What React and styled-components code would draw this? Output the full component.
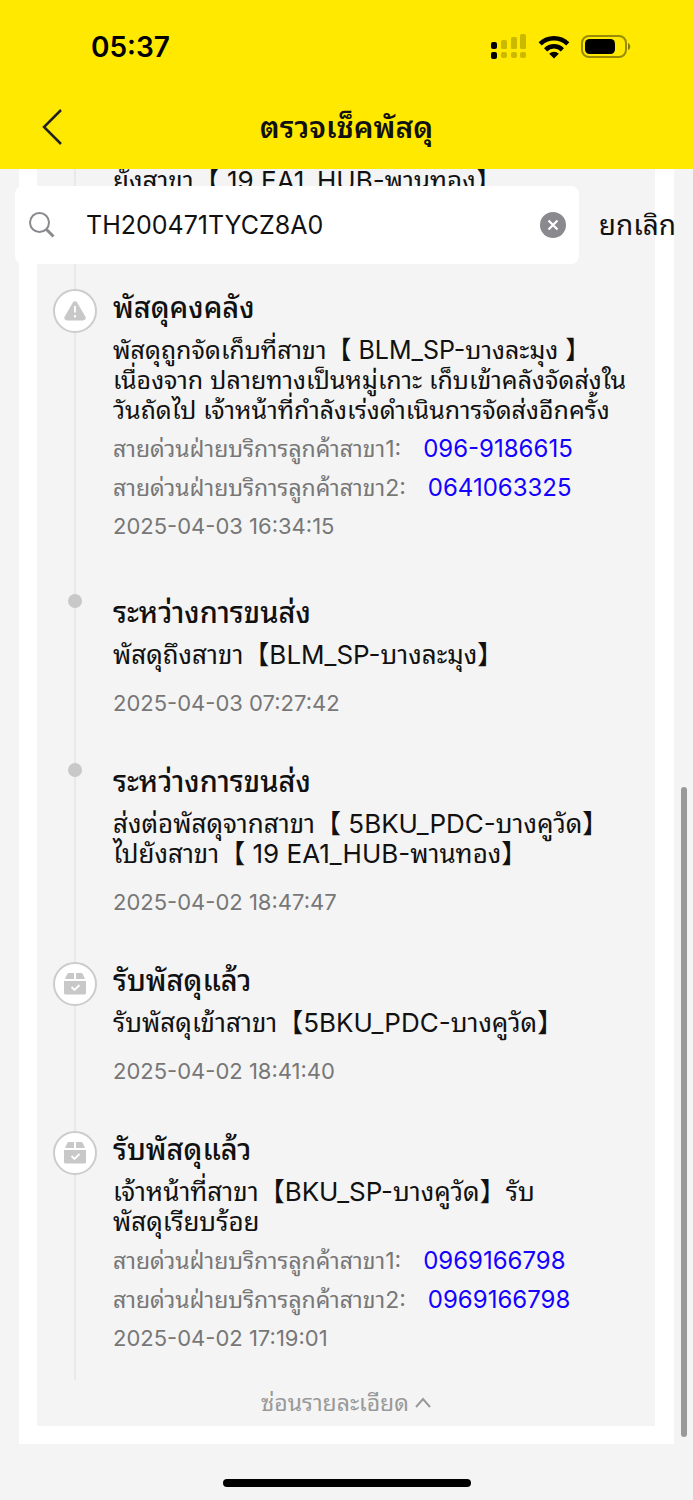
import { useState } from 'react';
import styled, { createGlobalStyle } from 'styled-components'

const GlobalStyle = createGlobalStyle`
  * {
    box-sizing: border-box;
  }
  body {
    margin: 0;
    background-color: #f4f4f4;
    color: #111;
    font-family: Inter, "Noto Sans Thai Looped", Loma, "Noto Sans Thai", "Noto Sans", "Noto Sans CJK JP", sans-serif;
  }
`;

const Page = styled.div`
  position: relative;
  min-height: 100vh;
  overflow: hidden;
`;

const Header = styled.header`
  position: relative;
  z-index: 2;
  background-color: #ffe900;
`;
const StatusBar = styled.div`
  display: flex;
  align-items: center;
  justify-content: space-between;
  height: 94px;
  padding: 0 62px 0 91px;
`;
const Clock = styled.span`
  font-size: 28px;
  font-weight: 600;
  color: #000;
`;
const StatusIcons = styled.div`
  display: flex;
  align-items: center;
  gap: 11px;
`;
const NavBar = styled.div`
  display: grid;
  grid-template-columns: 60px 1fr 60px;
  align-items: center;
  height: 75px;
  padding: 0 22px 10px;
`;
const BackButton = styled.button`
  display: flex;
  justify-content: center;
  padding: 0;
  border: none;
  background: none;
  cursor: pointer;
`;
const Title = styled.h1`
  margin: 0;
  font-size: 30px;
  line-height: 40px;
  font-weight: 600;
  text-align: center;
`;

const Body = styled.main`
  position: relative;
  overflow: hidden;
`;
const SearchBar = styled.form`
  position: absolute;
  z-index: 1;
  top: 17px;
  left: 0;
  right: 0;
  display: flex;
  align-items: center;
  gap: 20px;
  padding: 0 17px 0 15px;
`;
const SearchBox = styled.label`
  flex: 1;
  min-width: 0;
  display: flex;
  align-items: center;
  height: 78px;
  padding: 0 13px;
  border-radius: 8px;
  background-color: white;
`;
const SearchInput = styled.input`
  flex: 1;
  min-width: 0;
  margin-left: 30px;
  padding: 0;
  border: none;
  outline: none;
  background: none;
  color: #111;
  font-family: inherit;
  font-size: 25px;
`;
const ClearButton = styled.button`
  display: flex;
  padding: 0;
  border: none;
  background: none;
  cursor: pointer;
`;
const CancelButton = styled.button`
  padding: 0;
  border: none;
  background: none;
  color: #111;
  font-family: inherit;
  font-size: 28px;
  line-height: 40px;
  cursor: pointer;
`;

/* the list is scrolled, so its first line is cut by the header */
const Card = styled.section`
  margin: -3px 19px 0;
  padding: 0 19px 18px 18px;
  background-color: white;
`;
const Panel = styled.div`
  padding: 0 16px;
  background-color: #f4f4f4;
`;
const Timeline = styled.ol`
  margin: 0;
  padding: 0;
  list-style: none;
`;
const Item = styled.li`
  display: grid;
  grid-template-columns: 44px 1fr;
  column-gap: 16px;
  padding-bottom: ${props => props.$space}px;
  background: linear-gradient(#e9e9e9, #e9e9e9) 21px 0 / 2px 100% no-repeat;
`;
const Marker = styled.div`
  display: flex;
  align-items: flex-start;
  justify-content: center;
  padding-top: 1px;
`;
const Dot = styled.span`
  width: 14px;
  height: 14px;
  border-radius: 50%;
  background-color: #c8c8c8;
`;
const Circle = styled.span`
  display: flex;
  align-items: center;
  justify-content: center;
  width: 44px;
  height: 44px;
  border: 2px solid #ccc;
  border-radius: 50%;
  background-color: white;
`;
const ItemTitle = styled.h2`
  margin: 0 0 7px;
  font-size: 29px;
  line-height: 40px;
  font-weight: 500;
`;
const Detail = styled.p`
  margin: 0;
  font-size: ${props => props.$small ? "25px" : "26px"};
  line-height: 30px;
  white-space: pre;
`;
const Contacts = styled.div`
  margin-top: 4px;
`;
const Contact = styled.div`
  display: flex;
  align-items: baseline;
  gap: 22px;
  height: 39px;
  color: #777;
  font-size: 23px;
  line-height: 39px;
  white-space: nowrap;
`;
const Phone = styled.a`
  color: #1400ff;
  font-size: 24px;
  text-decoration: none;
`;
const Time = styled.time`
  display: block;
  margin-top: ${props => props.$tight ? "4px" : "18px"};
  color: #777;
  font-size: 22px;
  line-height: 30px;
`;
const HideButton = styled.button`
  display: flex;
  align-items: center;
  justify-content: center;
  gap: 6px;
  width: 100%;
  height: 46px;
  padding: 0;
  border: none;
  background: none;
  color: #999;
  font-family: inherit;
  font-size: 23px;
  line-height: 46px;
  cursor: pointer;
`;

const ScrollThumb = styled.div`
  position: absolute;
  z-index: 3;
  right: 6px;
  bottom: 63px;
  width: 6px;
  height: 650px;
  border-radius: 3px;
  background-color: #999;
`;
const HomeIndicator = styled.div`
  position: absolute;
  left: 50%;
  bottom: 13px;
  width: 248px;
  height: 8px;
  margin-left: -124px;
  border-radius: 4px;
  background-color: #000;
`;

const SignalIcon = () => (
  <svg width="36" height="26" viewBox="0 0 36 26">
    <g fill="#000">
      <rect x="0" y="8" width="6" height="7" rx="2" />
      <rect x="0" y="18" width="6" height="7" rx="2" />
    </g>
    <g fill="#000" opacity="0.2">
      <rect x="10" y="6" width="6" height="9" rx="1.5" />
      <rect x="20" y="3" width="6" height="12" rx="1.5" />
      <rect x="29" y="0" width="6" height="15" rx="1.5" />
      <rect x="10" y="18" width="6" height="6" rx="2" />
      <rect x="20" y="18" width="6" height="6" rx="2" />
      <rect x="29" y="18" width="6" height="6" rx="2" />
    </g>
  </svg>
)

const WifiIcon = () => (
  <svg width="32" height="24" viewBox="0 0 32 24" fill="none" stroke="#000" strokeWidth="4.5">
    <path d="M2.200 8.800a19.800 19.800 0 0 1 27.600 0" />
    <path d="M7.600 14.800a12 12 0 0 1 16.800 0" />
    <path d="M16 23.400l-4.800-4.700a7 7 0 0 1 9.600 0z" fill="#000" stroke="none" />
  </svg>
)

const BatteryIcon = () => (
  <svg width="50" height="24" viewBox="0 0 50 24">
    <rect x="1" y="1" width="44" height="21" rx="7" fill="none" stroke="#000" strokeOpacity="0.4" strokeWidth="2" />
    <rect x="4" y="4" width="30" height="15" rx="4.500" fill="#000" />
    <path d="M47 8c3 1 3 6 0 7z" fill="#000" fillOpacity="0.45" />
  </svg>
)

const WarningIcon = () => (
  <svg width="24" height="22" viewBox="0 0 24 22">
    <path d="M9.900 2.400a2.500 2.500 0 0 1 4.200 0l8.200 14a2.600 2.600 0 0 1-2.200 4H3.900a2.600 2.600 0 0 1-2.200-4z" fill="#c8c8c8" />
    <path d="M12 6v6.500M12 15v2.400" stroke="white" strokeWidth="1.800" />
  </svg>
)

const ParcelIcon = () => (
  <svg width="22" height="22" viewBox="0 0 22 22">
    <path d="M5 0h5v6H1l2-4.600Q3.600 0 5 0zM12 0h5q1.400 0 2 1.400L21 6h-9z" fill="#c8c8c8" />
    <path d="M0 8h22v12q0 1.500-1.500 1.500h-19Q0 21.500 0 20z" fill="#c8c8c8" />
    <path d="M7.500 14l3 3 5-5" fill="none" stroke="white" strokeWidth="1.800" />
  </svg>
)

const icons = {
  warning: <WarningIcon />,
  parcel: <ParcelIcon />,
};

const items = [
  {
    detail: "ยังสาขา【 19 EA1_HUB-พานทอง】",
    time: "2025-04-03 18:20:11",
  },
  {
    icon: "warning",
    title: "พัสดุคงคลัง",
    detail: "พัสดุถูกจัดเก็บที่สาขา【 BLM_SP-บางละมุง 】\nเนื่องจาก ปลายทางเป็นหมู่เกาะ เก็บเข้าคลังจัดส่งใน\nวันถัดไป เจ้าหน้าที่กำลังเร่งดำเนินการจัดส่งอีกครั้ง",
    phones: ["096-9186615", "0641063325"],
    time: "2025-04-03 16:34:15",
  },
  {
    icon: "dot",
    title: "ระหว่างการขนส่ง",
    detail: "พัสดุถึงสาขา【BLM_SP-บางละมุง】",
    time: "2025-04-03 07:27:42",
  },
  {
    icon: "dot",
    title: "ระหว่างการขนส่ง",
    detail: "ส่งต่อพัสดุจากสาขา【 5BKU_PDC-บางคูวัด】\nไปยังสาขา【 19 EA1_HUB-พานทอง】",
    time: "2025-04-02 18:47:47",
  },
  {
    icon: "parcel",
    title: "รับพัสดุแล้ว",
    detail: "รับพัสดุเข้าสาขา【5BKU_PDC-บางคูวัด】",
    time: "2025-04-02 18:41:40",
  },
  {
    icon: "parcel",
    title: "รับพัสดุแล้ว",
    detail: "เจ้าหน้าที่สาขา【BKU_SP-บางคูวัด】รับ\nพัสดุเรียบร้อย",
    phones: ["0969166798", "0969166798"],
    time: "2025-04-02 17:19:01",
  },
];

const TimelineItem = ({ item, last }) => {
  const space = last ? 27 : item.phones ? 52 : 44;
  return (
    <Item $space={space}>
      <Marker>
        {item.icon === "dot" && <Dot />}
        {icons[item.icon] && <Circle>{icons[item.icon]}</Circle>}
      </Marker>
      <div>
        {item.title && <ItemTitle>{item.title}</ItemTitle>}
        <Detail $small={item.icon === "warning"}>{item.detail}</Detail>
        {item.phones && (
          <Contacts>
            {item.phones.map((phone, i) => (
              <Contact key={i}>
                <span>สายด่วนฝ่ายบริการลูกค้าสาขา{i + 1}:</span>
                <Phone href={`tel:${phone}`}>{phone}</Phone>
              </Contact>
            ))}
          </Contacts>
        )}
        <Time $tight={!!item.phones}>{item.time}</Time>
      </div>
    </Item>
  )
}

const App = () => {
  const [code, setCode] = useState("TH200471TYCZ8A0");

  return (
    <Page>
      <GlobalStyle />
      <Header>
        <StatusBar>
          <Clock>05:37</Clock>
          <StatusIcons>
            <SignalIcon />
            <WifiIcon />
            <BatteryIcon />
          </StatusIcons>
        </StatusBar>
        <NavBar>
          <BackButton aria-label="กลับ">
            <svg width="22" height="38" viewBox="0 0 22 38" fill="none" stroke="#222" strokeWidth="2.500">
              <path d="M20 2L3 19l17 17" />
            </svg>
          </BackButton>
          <Title>ตรวจเช็คพัสดุ</Title>
        </NavBar>
      </Header>
      <Body>
        <SearchBar onSubmit={e => e.preventDefault()}>
          <SearchBox>
            <svg width="28" height="28" viewBox="0 0 28 28" fill="none" stroke="#8a8a8e">
              <circle cx="11.500" cy="11.500" r="9.500" strokeWidth="2" />
              <path d="M18.500 18.500l7 7" strokeWidth="3" />
            </svg>
            <SearchInput aria-label="เลขพัสดุ" value={code} onChange={e => setCode(e.target.value)} />
            <ClearButton type="button" aria-label="ล้าง" onClick={() => setCode("")}>
              <svg width="26" height="26" viewBox="0 0 26 26">
                <circle cx="13" cy="13" r="13" fill="#8a8a8e" />
                <path d="M8.500 8.500l9 9M17.500 8.500l-9 9" stroke="white" strokeWidth="2.200" />
              </svg>
            </ClearButton>
          </SearchBox>
          <CancelButton type="button">ยกเลิก</CancelButton>
        </SearchBar>
        <Card>
          <Panel>
            <Timeline>
              {items.map((item, i) => (
                <TimelineItem key={item.time} item={item} last={i === items.length - 1} />
              ))}
            </Timeline>
            <HideButton>
              ซ่อนรายละเอียด
              <svg width="16" height="12" viewBox="0 0 16 12" fill="none" stroke="#999" strokeWidth="2">
                <path d="M1 10l7-8 7 8" />
              </svg>
            </HideButton>
          </Panel>
        </Card>
      </Body>
      <ScrollThumb />
      <HomeIndicator />
    </Page>
  )
}

export default App
